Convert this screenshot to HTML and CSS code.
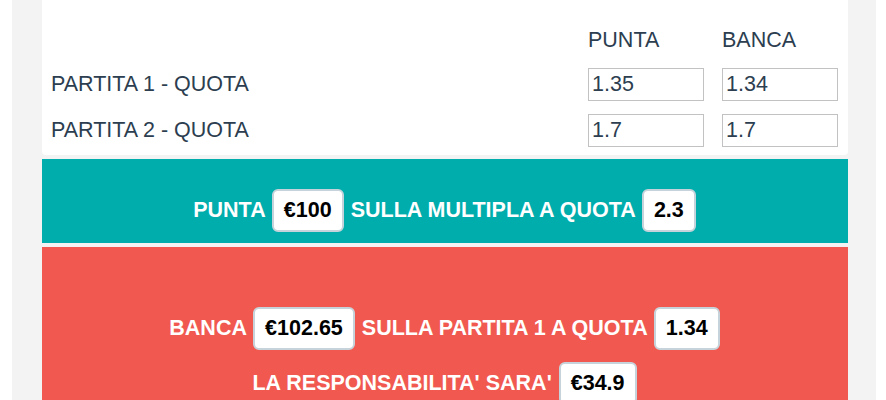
FILE: index.html
```html
<!DOCTYPE html>
<html lang="en">
<head>
  <meta charset="UTF-8" />
  <title>Calcolo Multipla</title>
  <link rel="stylesheet" href="styles.css">
</head>
<body>

  <div class="page">
    <div class="card">
      <div class="odds">
        <div></div>
        <div class="head">PUNTA</div>
        <div class="head">BANCA</div>

        <div class="label">PARTITA 1 - QUOTA</div>
        <input type="text" value="1.35">
        <input type="text" value="1.34">

        <div class="label">PARTITA 2 - QUOTA</div>
        <input type="text" value="1.7">
        <input type="text" value="1.7">
      </div>
    </div>

    <div class="result back">
      <p>PUNTA <span class="val">€100</span> SULLA MULTIPLA A QUOTA <span class="val">2.3</span></p>
    </div>

    <div class="result lay">
      <p>BANCA <span class="val">€102.65</span> SULLA PARTITA 1 A QUOTA <span class="val">1.34</span></p>
      <p>LA RESPONSABILITA' SARA' <span class="val">€34.9</span></p>
    </div>
  </div>

</body>
</html>
```

FILE: styles.css
```css
body {
  margin: 0;
  font-family: "Liberation Sans", Arial, sans-serif;
  background: white;
}
.page {
  margin: 0 10px 0 12px;
  padding: 0 28px 0 30px;
  background: #f2f3f2;
  display: flex;
  flex-direction: column;
  gap: 4px;
  min-height: 400px;
}
.card {
  background: white;
  border-radius: 0 0 4px 4px;
  padding: 28px 10px 8px 9px;
  color: #2c3e50;
}
.odds {
  display: grid;
  grid-template-columns: 1fr 116px 116px;
  column-gap: 18px;
  row-gap: 13px;
  align-items: center;
  font-size: 21.5px;
}
.head {
  margin-bottom: 3px;
  line-height: 24px;
}
.odds input {
  box-sizing: border-box;
  width: 116px;
  height: 33px;
  border: 1px solid #c2c2c2;
  padding: 0 3px;
  font-family: inherit;
  font-size: 21.5px;
  color: #2c3e50;
}
.result {
  color: white;
  font-weight: bold;
  font-size: 21.5px;
  line-height: 23px;
  text-align: center;
  display: flex;
  flex-direction: column;
  gap: 12px;
}
.result p {
  margin: 0;
}
.back {
  background: #00adad;
  padding: 30px 0 11px;
}
.lay {
  background: #f1584f;
  padding: 60px 0 20px;
}
.val {
  display: inline-block;
  background: white;
  color: black;
  border: 2px solid #c7d3db;
  border-radius: 6px;
  padding: 8px 10px;
  margin: 0 1px;
}
```
